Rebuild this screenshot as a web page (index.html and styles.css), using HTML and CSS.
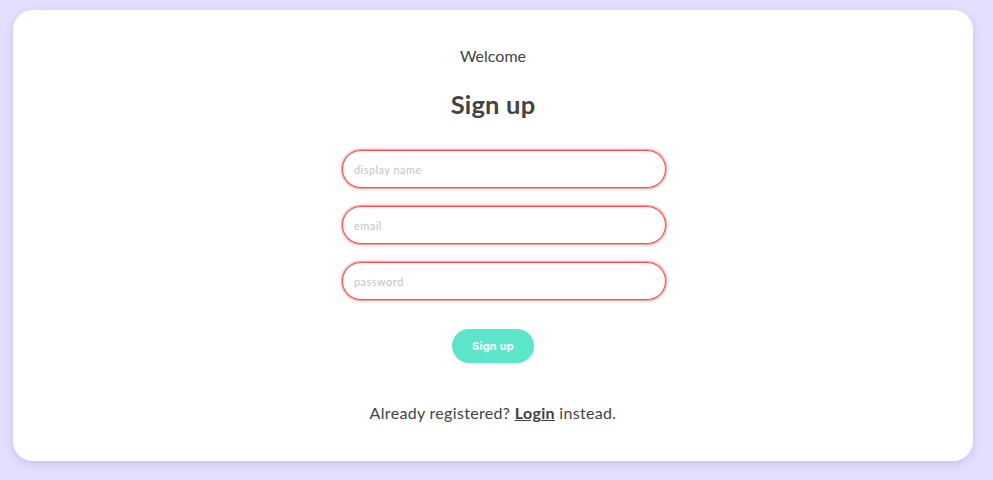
FILE: index.html
```html
<!DOCTYPE html>
<html lang="en">
<head>
<meta charset="utf-8">
<title>Sign up</title>
<link rel="stylesheet" href="styles.css">
</head>
<body>
<main class="card">
  <p class="welcome">Welcome</p>
  <h1 class="title">Sign up</h1>
  <form class="form">
    <input class="field" type="text" placeholder="display name">
    <input class="field" type="email" placeholder="email">
    <input class="field" type="password" placeholder="password">
    <button class="btn" type="button">Sign up</button>
  </form>
  <p class="alt">Already registered? <a class="link" href="#">Login</a> instead.</p>
</main>
</body>
</html>
```
FILE: styles.css
```css
html, body {
  margin: 0;
  padding: 0;
}
body {
  background: #e3dfff;
  height: 480px;
  padding: 10px 20px 0 13px;
  box-sizing: border-box;
  font-family: Lato, "Open Sans", sans-serif;
  color: #434343;
}
.card {
  background: #fff;
  border-radius: 20px;
  height: 451px;
  box-sizing: border-box;
  padding-top: 36px;
  display: flex;
  flex-direction: column;
  align-items: center;
  box-shadow: 0 3px 8px rgba(120, 110, 180, 0.25);
}
.welcome {
  margin: 0;
  font-size: 16px;
  line-height: 20px;
}
.title {
  margin: 23px 0 0;
  font-size: 25.5px;
  line-height: 30px;
  font-weight: 700;
  letter-spacing: 0.2px;
}
.form {
  margin-top: 31px;
  display: flex;
  flex-direction: column;
  align-items: center;
  gap: 18px;
}
.field {
  width: 324px;
  height: 38px;
  margin-left: 22px;
  box-sizing: border-box;
  border: 1px solid #ff4a4a;
  border-radius: 19px;
  box-shadow: 0 0 0 1px rgba(255, 90, 90, 0.45), 0 0 3px 1px rgba(255, 90, 90, 0.3);
  padding: 0 11px;
  font-family: Lato, sans-serif;
  font-size: 11px;
  letter-spacing: 0.45px;
  outline: none;
  background: #fff;
}
.field::placeholder {
  color: #c4c4c4;
}
.btn {
  margin-top: 11px;
  width: 82px;
  height: 34px;
  border: none;
  border-radius: 17px;
  background: #5ce6c9;
  color: #fff;
  font-family: Inter, Roboto, sans-serif;
  font-weight: 700;
  font-size: 11px;
  letter-spacing: 0.2px;
  cursor: pointer;
}
.alt {
  margin: 40px 0 0;
  font-size: 16px;
  line-height: 20px;
  letter-spacing: 0.32px;
}
.link {
  color: #434343;
  font-weight: 700;
  text-decoration: underline;
}
```
